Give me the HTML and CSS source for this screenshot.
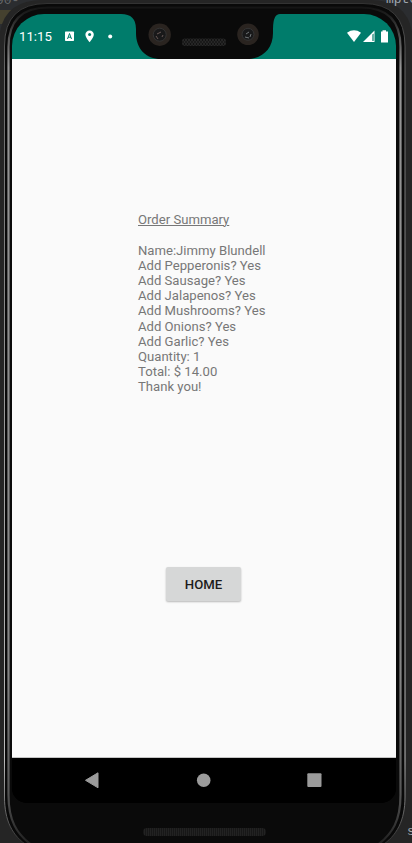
FILE: index.html
```
<!DOCTYPE html>
<html lang="en">
<head>
<meta charset="utf-8">
<title>Order Summary</title>
<link rel="stylesheet" href="styles.css">
</head>
<body>
<div class="device">
  <svg class="frame" width="412" height="843" viewBox="0 0 412 843" fill="none" aria-hidden="true">
    <defs>
      <linearGradient id="rim" x1="0" y1="0" x2="0" y2="843" gradientUnits="userSpaceOnUse">
        <stop offset="0" stop-color="#0a0a0a"/><stop offset=".02" stop-color="#222"/><stop offset=".08" stop-color="#969696"/><stop offset=".8" stop-color="#858585"/><stop offset=".94" stop-color="#555"/><stop offset="1" stop-color="#222"/>
      </linearGradient>
      <linearGradient id="edge" x1="0" y1="0" x2="0" y2="843" gradientUnits="userSpaceOnUse">
        <stop offset="0" stop-color="#303030"/><stop offset=".08" stop-color="#666"/><stop offset=".5" stop-color="#999"/><stop offset=".9" stop-color="#bbb"/><stop offset="1" stop-color="#333"/>
      </linearGradient>
    </defs>
    <rect x="0" y="10" width="14" height="14" fill="#45412f"/>
    <path d="M-1 850V44Q-1 0 43 0H370Q413 0 413 44V850Z" fill="#252525"/>
    <path d="M28 846C12 836 4.500 820 4.500 797V46Q4.500 3.500 47 3.500H363Q405 3.500 405 46V797C405 820 397 836 381 846" fill="#090909" stroke="url(#edge)"/>
    <path d="M33 846C16 834 8.500 820 8.500 795V47Q8.500 7.500 48 7.500H361Q400.500 7.500 400.500 47V795C400.500 820 393 834 376 846" fill="#0a0a0a" stroke="url(#rim)" stroke-width="2.200"/>
  </svg>
  <span class="scrap left">90-</span><span class="scrap right">mpte</span><span class="scrap low">s</span>
  <main class="screen">
    <header class="status">
      <span class="clock">11:15</span>
      <svg width="60" height="20" viewBox="0 0 60 20" aria-hidden="true">
        <rect x="0" y="4.500" width="9" height="9.500" rx=".7" fill="#fff"/>
        <path d="M2.500 12 4.500 6.500 6.500 12M3 10.200H6" stroke="#007c6b" stroke-width="1" fill="none"/>
        <path d="M24.600 3.400a4.200 4.200 0 0 0-4.200 4.200c0 3.200 4.200 7.700 4.200 7.700s4.200-4.500 4.200-7.700a4.200 4.200 0 0 0-4.200-4.200z" fill="#fff"/>
        <circle cx="24.600" cy="7.600" r="1.500" fill="#007c6b"/><circle cx="45.200" cy="9.500" r="2" fill="#fff"/>
      </svg>
      <svg class="signals" width="42" height="20" viewBox="0 0 42 20" aria-hidden="true">
        <path d="M0 5.700Q7 1 14 5.700L7 15Z" fill="#fff"/>
        <path d="M27.500 3.500V15H16Z" fill="#fff"/><path d="M25.400 7.500V14H26.600V6.500Z" fill="#007c6b"/>
        <path d="M35.500 4.500V3.300H39V4.500H41V15.500H34V4.500Z" fill="#fff"/>
      </svg>
    </header>
    <section class="content">
      <div class="summary"><u>Order Summary</u>

Name:Jimmy Blundell
Add Pepperonis? Yes
Add Sausage? Yes
Add Jalapenos? Yes
Add Mushrooms? Yes
Add Onions? Yes
Add Garlic? Yes
Quantity: 1
Total: $ 14.00
Thank you!</div>
      <button class="home">HOME</button>
    </section>
    <nav class="nav">
      <svg width="384" height="45" viewBox="0 0 384 45" fill="#9b9b9b" aria-hidden="true">
        <path d="M86 14.800V29.800L73.500 22.300Z" stroke="#9b9b9b" stroke-linejoin="round"/><circle cx="191.700" cy="22.200" r="6.800"/><rect x="295.300" y="15.200" width="14.200" height="13.800" rx="1"/>
      </svg>
    </nav>
  </main>
  <svg class="notch" width="160" height="62" viewBox="0 0 160 62" aria-hidden="true">
    <defs><pattern id="mesh" width="3" height="4" patternUnits="userSpaceOnUse"><rect width="3" height="4" fill="#121212"/><path d="M0 0L3 4M3 0L0 4" stroke="#303030" stroke-width=".7"/></pattern></defs>
    <path d="M0 12V14H1Q16 14 16 29V33C16 49 26 59 41 59H127C142 59 153 49 153 33V29Q153 14 160 14V12Z" fill="#0a0a0a"/>
    <g fill="#2a2420"><circle cx="39.700" cy="34.700" r="11.200"/><circle cx="128" cy="34.300" r="10.800"/></g>
    <g fill="#19191a" stroke="#343434"><circle cx="39.700" cy="34.700" r="6.500"/><circle cx="128" cy="34.300" r="6"/></g>
    <path d="M37 34l4-2M38 39l-2-3M42 37l1-2" stroke="#695957"/><path d="M126 34l3-2M130 37l1-3M125 37l4 1" stroke="#707577"/>
    <rect x="62" y="38.500" width="44" height="7.500" rx="3" fill="url(#mesh)"/>
  </svg>
  <div class="speaker"></div>
</div>
</body>
</html>
```
FILE: styles.css
```
* { box-sizing: border-box; }
body { margin: 0; font-family: Roboto, sans-serif; background: #2b2d30; }
.device { position: relative; width: 412px; height: 843px; overflow: hidden; padding: 14px 16px 0 12px; }
.frame { position: absolute; left: 0; top: 0; }
.screen { position: relative; display: flex; flex-direction: column; height: 789px; border-radius: 32px 32px 15px 15px; overflow: hidden; background: #000; }
.status { display: flex; height: 45px; padding: 13px 7px 0 7px; background: #007c6b; color: #fff; }
.clock { width: 46px; font-size: 13.2px; line-height: 20px; }
.signals { margin-left: auto; }
.content { flex: 1; display: flex; flex-direction: column; align-items: center; padding-top: 153.200px; background: #fafafa; border-bottom: 1px solid #c4c4c4; }
.summary { width: 132px; font-size: 13.12px; line-height: 15.2px; white-space: pre; color: #777; }
.summary u { text-underline-offset: 1px; text-decoration-thickness: 1px; }
.home { width: 75px; height: 34px; margin-top: 172.800px; margin-right: 1px; padding: 0; border: 0; border-radius: 2px; background: #d6d7d7; color: #1c1c1c; font: 500 13.2px Roboto, sans-serif; box-shadow: 0 1px 2px #0004; }
.nav { height: 45px; background: #000; }
.notch { position: absolute; left: 120px; top: 0; }
.speaker { position: absolute; left: 143px; top: 828px; width: 123px; height: 8px; border-radius: 4px; background: repeating-linear-gradient(90deg, #171717 0 1px, #222 1px 2px); }
.scrap { position: absolute; font: 13px "Liberation Mono", monospace; line-height: 12px; color: #a0a8b0; }
.left { left: -4px; top: -5px; color: #66696c; }
.right { left: 386px; top: -6px; }
.low { left: 407px; top: 826px; }
```
